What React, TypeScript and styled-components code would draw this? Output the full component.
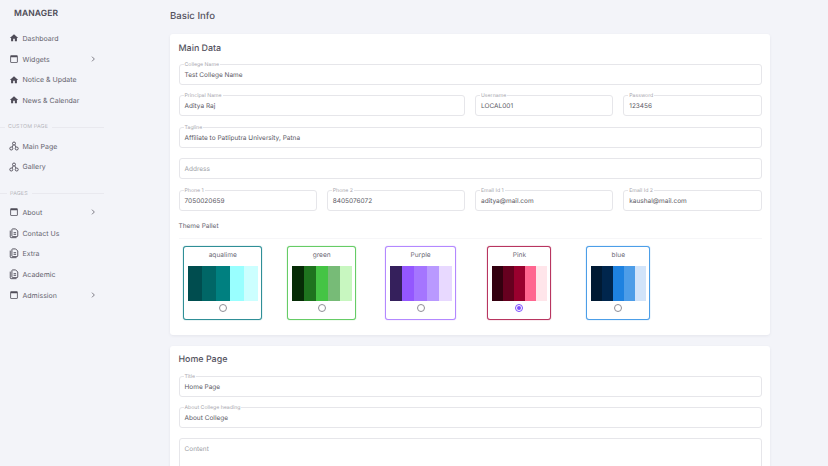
import styled, { createGlobalStyle } from 'styled-components';

const GlobalStyle = createGlobalStyle`
  html, body {
    margin: 0;
    padding: 0;
    height: 100%;
    overflow: hidden;
    background: #f3f4f9;
    font-family: Inter, "Liberation Sans", sans-serif;
    color: #55535f;
    text-rendering: geometricPrecision;
  }
  * { box-sizing: border-box; }
`;

const Layout = styled.div`
  display: flex;
  width: 828px;
  height: 466px;
  overflow: hidden;
`;

const Sidebar = styled.aside`
  width: 170px;
  flex: none;
  padding-top: 9px;
`;

const Brand = styled.div`
  font-size: 8.5px;
  font-weight: 600;
  letter-spacing: 0.1px;
  line-height: 10px;
  padding-left: 14px;
  margin-bottom: 9px;
  color: #4d4b56;
`;

const NavRow = styled.div`
  display: flex;
  align-items: center;
  height: 20.7px;
  width: 104px;
  padding-left: 9px;
  padding-right: 7px;
  font-size: 7px;
  color: #66646f;
  svg { flex: none; }
`;

const NavLabel = styled.span`
  margin-left: 3.5px;
  flex: 1;
`;

const SectionLabel = styled.div`
  display: flex;
  align-items: center;
  width: 104px;
  height: 10px;
  margin: 11.5px 0 3.5px;
  font-size: 5.3px;
  letter-spacing: 0.15px;
  color: #b5b4bb;
  &::before {
    content: '';
    width: ${({ $lead }: { $lead: number }) => $lead}px;
    height: 1px;
    background: #e9e9ef;
    margin-right: 3px;
  }
  &::after {
    content: '';
    flex: 1;
    height: 1px;
    background: #e9e9ef;
    margin-left: 4px;
  }
`;

const Main = styled.main`
  width: 600px;
  flex: none;
`;

const PageTitle = styled.h1`
  margin: 0;
  height: 34px;
  padding-top: 9.5px;
  font-size: 9.6px;
  line-height: 13px;
  font-weight: 500;
  color: #55535f;
`;

const Card = styled.section`
  background: #fff;
  border-radius: 3px;
  box-shadow: 0 1px 3px rgba(60, 64, 90, 0.08);
  padding: 8.5px 8.5px 0;
  margin-bottom: 11px;
`;

const CardTitle = styled.h2`
  margin: 0 0 10.5px;
  font-size: 8.9px;
  line-height: 11px;
  font-weight: 500;
  color: #55535f;
`;

const FormGrid = styled.div`
  display: grid;
  grid-template-columns: repeat(4, 1fr);
  gap: 10.4px 10px;
`;

const Field = styled.div<{ $span: number }>`
  position: relative;
  grid-column: span ${({ $span }) => $span};
  height: 21px;
  border: 1px solid #e6e6ea;
  border-radius: 3px;
  padding: 1px 5px 0;
  display: flex;
  align-items: center;
  font-size: 6.5px;
  color: #5b5965;
  background: #fff;
`;

const FloatLabel = styled.label`
  position: absolute;
  left: 4px;
  top: -3px;
  padding: 0 1px;
  font-size: 5.2px;
  line-height: 6px;
  color: #a5a4ab;
  background: #fff;
`;

const Placeholder = styled.span`
  font-size: 6.5px;
  line-height: 9px;
  color: #a09fa7;
`;

const PalletHeading = styled.div`
  margin-top: 11px;
  padding-bottom: 7px;
  font-size: 6.5px;
  line-height: 9px;
  color: #66646f;
  border-bottom: 1px solid #f6f6f8;
`;

const PalletGrid = styled.div`
  display: grid;
  grid-template-columns: repeat(6, 98.9px);
  justify-items: center;
  margin: 7px 0 0 -5.2px;
  padding-bottom: 15px;
`;

const Pallet = styled.div<{ $border: string }>`
  height: 74px;
  border: 1px solid ${({ $border }) => $border};
  box-shadow: 0 0 1px ${({ $border }) => $border};
  border-radius: 3px;
  padding: 0 3.5px;
  display: flex;
  flex-direction: column;
  align-items: center;
  background: #fff;
`;

const PalletName = styled.div`
  height: 19.5px;
  line-height: 16px;
  font-size: 6.6px;
  color: #6d6b76;
`;

const Swatches = styled.div`
  display: flex;
`;

const Swatch = styled.div<{ $w: number; $color: string }>`
  width: ${({ $w }) => $w}px;
  height: 35px;
  background: ${({ $color }) => $color};
`;

const Radio = styled.div<{ $on?: boolean }>`
  width: 8px;
  height: 8px;
  margin-top: 3px;
  border-radius: 50%;
  border: 1px solid ${({ $on }) => ($on ? '#7c4dff' : '#8f8e96')};
  display: flex;
  align-items: center;
  justify-content: center;
  &::after {
    content: '';
    display: ${({ $on }) => ($on ? 'block' : 'none')};
    width: 4px;
    height: 4px;
    border-radius: 50%;
    background: #7c4dff;
  }
`;

const ContentBox = styled.div`
  height: 60px;
  margin-top: 10.4px;
  border: 1px solid #e6e6ea;
  border-radius: 3px;
  padding: 6px 5px;
  display: flex;
  align-items: flex-start;
`;

const HomeIcon = () => (
  <svg width="10" height="10" viewBox="0 0 24 24" fill="#4f4c58">
    <path d="M10 20v-6h4v6h5v-8h3L12 3 2 12h3v8z" />
  </svg>
);

const WindowIcon = () => (
  <svg width="10" height="10" viewBox="0 0 24 24" fill="#4f4c58">
    <path d="M19 3H5c-1.100 0-2 .9-2 2v14c0 1.100.9 2 2 2h14c1.100 0 2-.9 2-2V5c0-1.100-.9-2-2-2zm0 16H5V7.500h14V19z" />
  </svg>
);

const NodesIcon = () => (
  <svg width="10" height="10" viewBox="0 0 24 24" fill="none" stroke="#4f4c58" strokeWidth="2.200">
    <circle cx="12" cy="6" r="3.600" />
    <circle cx="5.500" cy="18" r="3.600" />
    <circle cx="18.500" cy="18" r="3.600" />
    <path d="M10 9.500 7.500 14.500M14 9.500l2.500 5" />
  </svg>
);

const DocsIcon = () => (
  <svg width="10" height="11" viewBox="0 0 24 26" fill="none" stroke="#4f4c58" strokeWidth="2.200">
    <path d="M3 6v15c0 1.200.8 2 2 2h13" />
    <path d="M7 3.500c0-.8.7-1.500 1.500-1.500H16l5 5v12c0 .8-.7 1.500-1.500 1.500h-11C7.700 20.500 7 19.800 7 19z" />
    <path d="M11 11h6M11 15h6" />
  </svg>
);

const Chevron = () => (
  <svg width="8" height="8" viewBox="0 0 24 24" fill="none" stroke="#66646f" strokeWidth="2.500">
    <path d="m9 5 7 7-7 7" />
  </svg>
);

type NavItem = { label: string; icon: 'home' | 'window' | 'nodes' | 'docs'; arrow?: boolean };

const icons = {
  home: <HomeIcon />,
  window: <WindowIcon />,
  nodes: <NodesIcon />,
  docs: <DocsIcon />,
};

const topNav: NavItem[] = [
  { label: 'Dashboard', icon: 'home' },
  { label: 'Widgets', icon: 'window', arrow: true },
  { label: 'Notice & Update', icon: 'home' },
  { label: 'News & Calendar', icon: 'home' },
];

const customNav: NavItem[] = [
  { label: 'Main Page', icon: 'nodes' },
  { label: 'Gallery', icon: 'nodes' },
];

const pagesNav: NavItem[] = [
  { label: 'About', icon: 'window', arrow: true },
  { label: 'Contact Us', icon: 'docs' },
  { label: 'Extra', icon: 'docs' },
  { label: 'Academic', icon: 'docs' },
  { label: 'Admission', icon: 'window', arrow: true },
];

const fields = [
  { label: 'College Name', value: 'Test College Name', span: 4 },
  { label: 'Principal Name', value: 'Aditya Raj', span: 2 },
  { label: 'Username', value: 'LOCAL001', span: 1 },
  { label: 'Password', value: '123456', span: 1 },
  { label: 'Tagline', value: 'Affiliate to Patliputra University, Patna', span: 4 },
  { label: '', value: 'Address', span: 4 },
  { label: 'Phone 1', value: '7050020659', span: 1 },
  { label: 'Phone 2', value: '8405076072', span: 1 },
  { label: 'Email Id 1', value: 'aditya@mail.com', span: 1 },
  { label: 'Email Id 2', value: 'kaushal@mail.com', span: 1 },
];

const pallets = [
  { name: 'aqualime', border: '#2f8f97', w: 14, colors: ['#004d4f', '#006666', '#008080', '#99ffff', '#ccffff'] },
  { name: 'green', border: '#66cc66', w: 12, colors: ['#062b06', '#1e731e', '#44c444', '#77bb77', '#c8f7c0'] },
  { name: 'Purple', border: '#b388ff', w: 12.4, colors: ['#35205c', '#9457ff', '#a575ff', '#b999ff', '#e8d9ff'] },
  { name: 'Pink', border: '#b83560', w: 11, selected: true, colors: ['#33000f', '#66001f', '#99002e', '#ff6690', '#ffe5ea'] },
  { name: 'blue', border: '#4c9ee8', w: 11, colors: ['#001a33', '#00264d', '#1e82e0', '#4d9de8', '#d2e4fa'] },
];

const renderNav = (items: NavItem[]) =>
  items.map((item) => (
    <NavRow key={item.label}>
      {icons[item.icon]}
      <NavLabel>{item.label}</NavLabel>
      {item.arrow && <Chevron />}
    </NavRow>
  ));

const App = () => {
  return (
    <Layout>
      <GlobalStyle />
      <Sidebar>
        <Brand>MANAGER</Brand>
        {renderNav(topNav)}
        <SectionLabel $lead={5}>CUSTOM PAGE</SectionLabel>
        {renderNav(customNav)}
        <SectionLabel $lead={7}>PAGES</SectionLabel>
        {renderNav(pagesNav)}
      </Sidebar>
      <Main>
        <PageTitle>Basic Info</PageTitle>
        <Card>
          <CardTitle>Main Data</CardTitle>
          <FormGrid>
            {fields.map((field) => (
              <Field key={field.value} $span={field.span}>
                {field.label ? (
                  <>
                    <FloatLabel>{field.label}</FloatLabel>
                    {field.value}
                  </>
                ) : (
                  <Placeholder>{field.value}</Placeholder>
                )}
              </Field>
            ))}
          </FormGrid>
          <PalletHeading>Theme Pallet</PalletHeading>
          <PalletGrid>
            {pallets.map((pallet) => (
              <Pallet key={pallet.name} $border={pallet.border}>
                <PalletName>{pallet.name}</PalletName>
                <Swatches>
                  {pallet.colors.map((color) => (
                    <Swatch key={color} $w={pallet.w} $color={color} />
                  ))}
                </Swatches>
                <Radio $on={pallet.selected} />
              </Pallet>
            ))}
          </PalletGrid>
        </Card>
        <Card>
          <CardTitle>Home Page</CardTitle>
          <FormGrid>
            <Field $span={4}>
              <FloatLabel>Title</FloatLabel>
              Home Page
            </Field>
            <Field $span={4}>
              <FloatLabel>About College heading</FloatLabel>
              About College
            </Field>
          </FormGrid>
          <ContentBox>
            <Placeholder>Content</Placeholder>
          </ContentBox>
        </Card>
      </Main>
    </Layout>
  );
};

export default App;
